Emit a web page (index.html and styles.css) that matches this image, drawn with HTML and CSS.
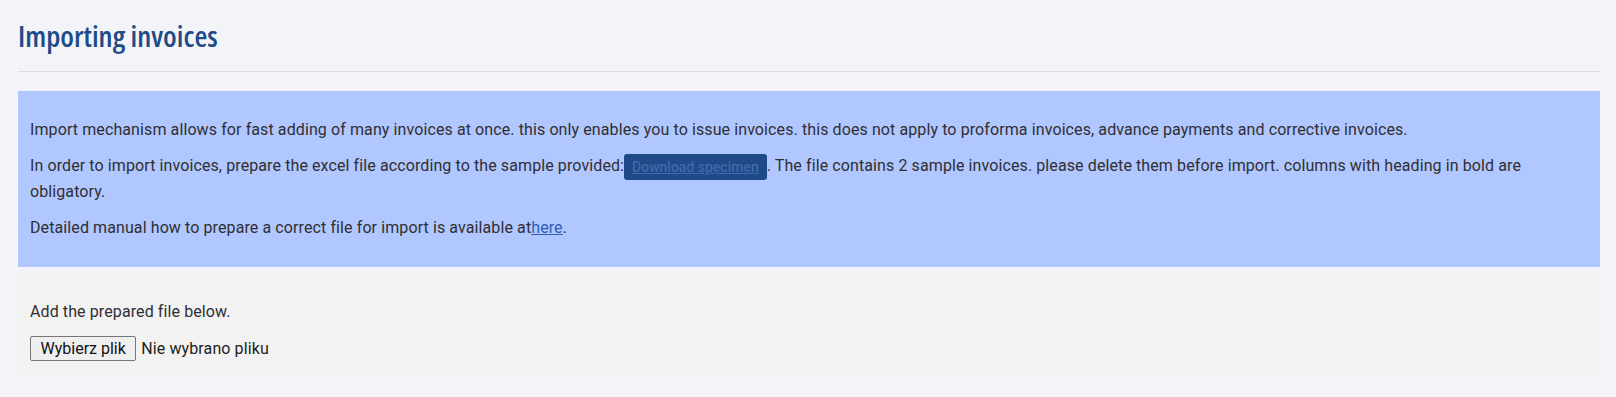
FILE: index.html
```html
<!DOCTYPE html>
<html lang="en">
<head>
<meta charset="utf-8">
<title>Importing invoices</title>
<link rel="stylesheet" href="styles.css">
</head>
<body>
<main class="page">
  <h1 class="title">Importing invoices</h1>
  <hr class="divider">
  <section class="info">
    <p>Import mechanism allows for fast adding of many invoices at once. this only enables you to issue invoices. this does not apply to proforma invoices, advance payments and corrective invoices.</p>
    <p>In order to import invoices, prepare the excel file according to the sample provided:<a class="btn-specimen" href="#">Download specimen</a>. The file contains 2 sample invoices. please delete them before import. columns with heading in bold are obligatory.</p>
    <p>Detailed manual how to prepare a correct file for import is available at<a class="link" href="#">here</a>.</p>
  </section>
  <section class="upload">
    <p>Add the prepared file below.</p>
    <div class="file-row"><span class="file-btn">Wybierz plik</span><span class="file-name">Nie wybrano pliku</span></div>
  </section>
</main>
</body>
</html>
```
FILE: styles.css
```css
html, body {
  margin: 0;
  padding: 0;
  background: #f3f4f8;
}
body {
  font-family: Roboto, "Liberation Sans", sans-serif;
  font-size: 16px;
  line-height: 24px;
  color: #2f2f33;
  letter-spacing: 0.1px;
}
.page {
  padding: 0 16px 0 18px;
}
.title {
  margin: 0;
  padding: 18px 0 0;
  height: 53px;
  font-family: "Open Sans", "DejaVu Sans Condensed", sans-serif;
  font-stretch: 80%;
  font-weight: 600;
  font-size: 29.5px;
  line-height: 36px;
  color: #1f4b87;
  letter-spacing: 0;
}
.divider {
  margin: 0 0 19px;
  border: 0;
  border-top: 1px solid #dcdcdc;
  height: 0;
}
.info {
  background: #b1c7ff;
  padding: 15px 12px;
}
.info p, .upload p {
  margin: 12px 0;
}
.btn-specimen {
  display: inline-block;
  background: #1f4a88;
  color: #3d68ad;
  font-size: 14px;
  font-weight: 500;
  line-height: 24px;
  padding: 1px 8px;
  border-radius: 3px;
  text-decoration: underline;
  vertical-align: top;
  letter-spacing: 0;
}
.link {
  color: #2d5fb5;
  text-decoration: underline;
}
.upload {
  margin-top: 6px;
  background: #f2f2f2;
  padding: 15px 12px 12px;
}
.upload p {
  margin-bottom: 12px;
}
.file-row {
  display: flex;
  align-items: center;
  height: 25px;
}
.file-btn {
  box-sizing: border-box;
  height: 25px;
  padding: 0 9.5px;
  border: 1px solid #767676;
  border-radius: 2px;
  background: #efefef;
  color: #111;
  font-size: 16px;
  line-height: 23px;
  letter-spacing: 0;
}
.file-name {
  margin-left: 5px;
  font-size: 16px;
  color: #222;
}
```
